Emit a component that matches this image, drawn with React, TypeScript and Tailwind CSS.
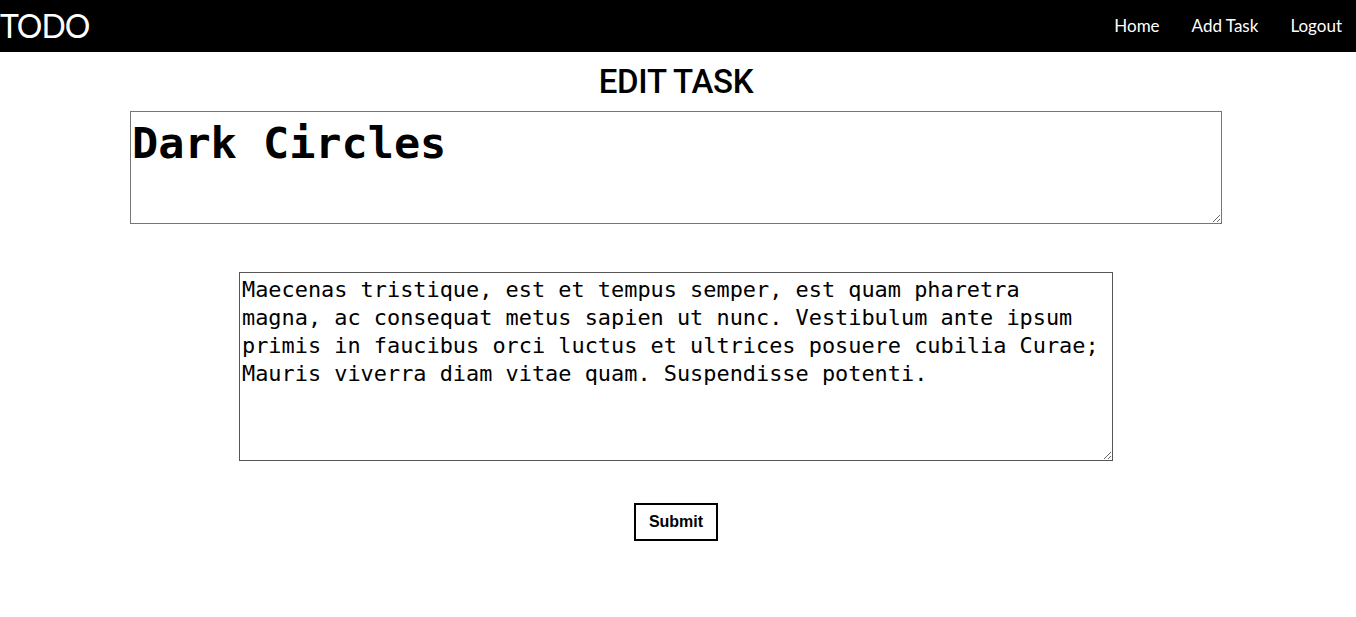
import React, { useState } from "react";

const mono = { fontFamily: '"DejaVu Sans Mono", monospace' };

const App = () => {
  const [title, setTitle] = useState("Dark Circles");
  const [body, setBody] = useState(
    "Maecenas tristique, est et tempus semper, est quam pharetra magna, ac consequat metus sapien ut nunc. Vestibulum ante ipsum primis in faucibus orci luctus et ultrices posuere cubilia Curae; Mauris viverra diam vitae quam. Suspendisse potenti."
  );

  return (
    <div className="min-h-screen bg-white">
      {/* Navbar */}
      <nav className="h-[52px] bg-black flex items-center justify-between pr-[14px]">
        <span className="text-white text-[32px] font-['Lato',sans-serif] tracking-[-1px] leading-none">
          TODO
        </span>
        <div className="flex items-center gap-8 text-white text-[17px] font-['Lato',sans-serif]">
          <a href="#">Home</a>
          <a href="#">Add Task</a>
          <a href="#">Logout</a>
        </div>
      </nav>

      {/* Form */}
      <main className="flex flex-col items-center pr-[4px]">
        <h1 className="mt-[13px] text-[33px] leading-[34px] font-medium text-black font-['Roboto',sans-serif] tracking-[-0.3px]">
          EDIT TASK
        </h1>
        <textarea
          value={title}
          onChange={(e) => setTitle(e.target.value)}
          style={mono}
          className="mt-[12px] w-[1092px] h-[113px] border border-[#767676] px-[1px] pt-[5px] text-[43.5px] leading-[52px] font-bold text-black resize-y outline-none"
        />
        <textarea
          value={body}
          onChange={(e) => setBody(e.target.value)}
          style={mono}
          className="mt-[48px] w-[874px] h-[189px] border border-[#555] px-[2px] pt-[3px] text-[21.9px] leading-[28px] text-black resize-y outline-none"
        />
        <button className="mt-[42px] w-[84px] h-[38px] border-2 border-black bg-white text-[16px] font-bold text-black font-['Liberation_Sans',Arial,sans-serif]">
          Submit
        </button>
      </main>
    </div>
  );
};

export default App;
